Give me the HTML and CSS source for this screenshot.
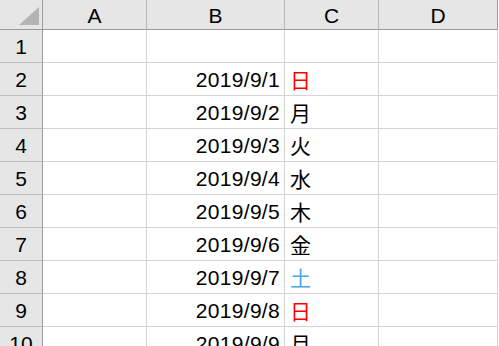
FILE: index.html
```html
<!DOCTYPE html>
<html lang="ja">
<head>
  <meta charset="UTF-8" /><meta name="viewport" content="width=device-width, initial-scale=1.0" />
  <title>曜日</title>
  <link rel="stylesheet" href="styles.css">
</head>
<body>
  <div class="sheet">
    <div class="corner"><span class="tri"></span></div>
    <div class="colhead">A</div>
    <div class="colhead">B</div>
    <div class="colhead">C</div>
    <div class="colhead">D</div>

    <div class="rowhead">1</div><div class="cell"></div><div class="cell"></div><div class="cell"></div><div class="cell"></div>
    <div class="rowhead">2</div><div class="cell"></div><div class="cell num">2019/9/1</div><div class="cell day sun">日</div><div class="cell"></div>
    <div class="rowhead">3</div><div class="cell"></div><div class="cell num">2019/9/2</div><div class="cell day">月</div><div class="cell"></div>
    <div class="rowhead">4</div><div class="cell"></div><div class="cell num">2019/9/3</div><div class="cell day">火</div><div class="cell"></div>
    <div class="rowhead">5</div><div class="cell"></div><div class="cell num">2019/9/4</div><div class="cell day">水</div><div class="cell"></div>
    <div class="rowhead">6</div><div class="cell"></div><div class="cell num">2019/9/5</div><div class="cell day">木</div><div class="cell"></div>
    <div class="rowhead">7</div><div class="cell"></div><div class="cell num">2019/9/6</div><div class="cell day">金</div><div class="cell"></div>
    <div class="rowhead">8</div><div class="cell"></div><div class="cell num">2019/9/7</div><div class="cell day sat">土</div><div class="cell"></div>
    <div class="rowhead">9</div><div class="cell"></div><div class="cell num">2019/9/8</div><div class="cell day sun">日</div><div class="cell"></div>
    <div class="rowhead">10</div><div class="cell"></div><div class="cell num">2019/9/9</div><div class="cell day">月</div><div class="cell"></div>
  </div>
</body>
</html>
```

FILE: styles.css
```css
body { margin: 0; background: #fff; overflow: hidden; font-family: "Liberation Sans", Arial, "Noto Sans CJK JP", sans-serif; color: #000; }
.sheet { display: grid; grid-template-columns: 43px 104px 138px 94px 119px; grid-template-rows: 30px; grid-auto-rows: 33px; }
.sheet > div { box-sizing: border-box; border-right: 1px solid #d4d4d4; border-bottom: 1px solid #d4d4d4; display: flex; align-items: center; font-size: 21px; }
.corner { background: #e6e6e6; position: relative; border-right-color: #9b9b9b !important; border-bottom-color: #9b9b9b !important; }
.tri { position: absolute; right: 3px; bottom: 4px; width: 0; height: 0; border-left: 20px solid transparent; border-bottom: 18px solid #b4b4b4; }
.colhead { background: #e6e6e6; justify-content: center; border-right-color: #b8b8b8 !important; border-bottom-color: #9b9b9b !important; padding-top: 2px; }
.sheet > .colhead:nth-child(5) { border-right-color: #9b9b9b !important; }
.rowhead { background: #e6e6e6; justify-content: center; border-right-color: #9b9b9b !important; border-bottom-color: #bdbdbd !important; padding-top: 2px; }
.num { justify-content: flex-end; padding-right: 4px; padding-top: 2px; letter-spacing: 0.3px; }
.day { padding-left: 5px; font-family: "Noto Sans CJK JP", sans-serif; font-size: 18px; }
.sun { color: #ff0000; }
.sat { color: #4aa8e8; }
```
